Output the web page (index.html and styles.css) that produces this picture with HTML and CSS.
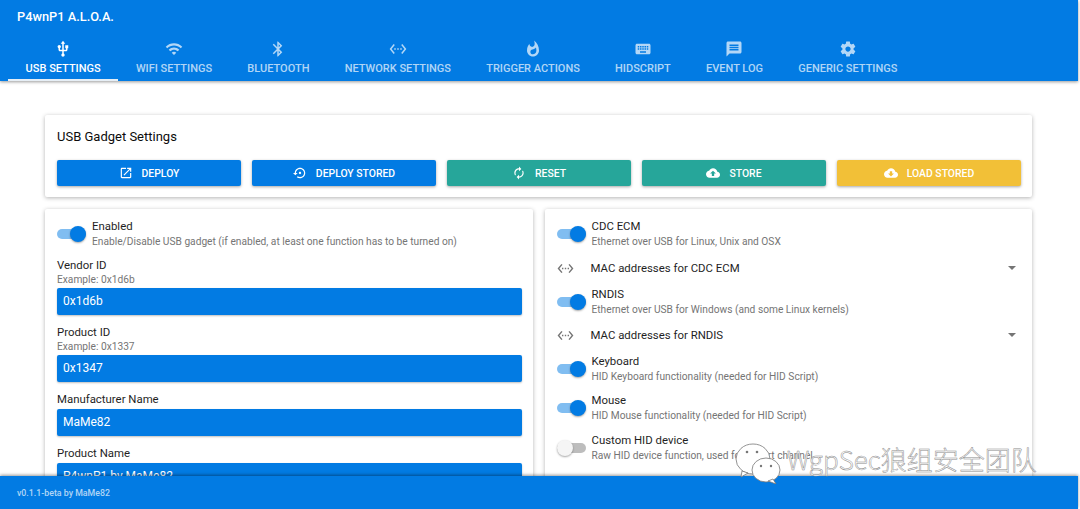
FILE: index.html
```html
<!DOCTYPE html>
<html lang="en">
<head>
    <meta charset="UTF-8" />
    <title>P4wnP1 A.L.O.A.</title>
    <link rel="stylesheet" href="styles.css">
</head>
<body>
    <svg class="sprite" width="0" height="0">
        <symbol id="i-usb" viewBox="0 0 24 24"><path d="M15 7v4h1v2h-3V5h2l-3-4-3 4h2v8H8v-2.07c.7-.37 1.2-1.08 1.2-1.93 0-1.21-.99-2.2-2.2-2.2-1.21 0-2.2.99-2.2 2.2 0 .85.5 1.56 1.2 1.93V13c0 1.11.89 2 2 2h3v3.05c-.71.37-1.2 1.1-1.2 1.95 0 1.22.99 2.2 2.2 2.2 1.21 0 2.2-.98 2.2-2.2 0-.85-.49-1.58-1.2-1.95V15h3c1.11 0 2-.89 2-2v-2h1V7h-4z"/></symbol>
        <symbol id="i-wifi" viewBox="0 0 24 24"><path d="M1 9l2 2c4.97-4.97 13.03-4.97 18 0l2-2C16.93 2.93 7.08 2.93 1 9zm8 8l3 3 3-3c-1.65-1.66-4.34-1.66-6 0zm-4-4l2 2c2.76-2.76 7.24-2.76 10 0l2-2C15.14 9.14 8.87 9.14 5 13z"/></symbol>
        <symbol id="i-bluetooth" viewBox="0 0 24 24"><path d="M17.71 7.71L12 2h-1v7.59L6.41 5 5 6.41 10.59 12 5 17.59 6.41 19 11 14.41V22h1l5.71-5.71-4.3-4.29 4.3-4.29zM13 5.83l1.88 1.88L13 9.59V5.83zm1.88 10.46L13 18.17v-3.76l1.88 1.88z"/></symbol>
        <symbol id="i-ethernet" viewBox="0 0 24 24"><path d="M7.77 6.76L6.23 5.48.82 12l5.41 6.52 1.54-1.28L3.42 12l4.35-5.24zM7 13h2v-2H7v2zm10-2h-2v2h2v-2zm-6 2h2v-2h-2v2zm6.77-7.52l-1.54 1.28L20.58 12l-4.35 5.24 1.54 1.28L23.18 12l-5.41-6.52z"/></symbol>
        <symbol id="i-fire" viewBox="0 0 24 24"><path d="M13.5.67s.74 2.65.74 4.8c0 2.06-1.35 3.73-3.41 3.73-2.07 0-3.63-1.67-3.63-3.73l.03-.36C5.21 7.51 4 10.62 4 14c0 4.42 3.58 8 8 8s8-3.58 8-8C20 8.61 17.41 3.8 13.5.67zM11.71 19c-1.78 0-3.22-1.4-3.22-3.14 0-1.62 1.05-2.76 2.81-3.12 1.77-.36 3.6-1.21 4.62-2.58.39 1.29.59 2.65.59 4.04 0 2.65-2.15 4.8-4.8 4.8z"/></symbol>
        <symbol id="i-keyboard" viewBox="0 0 24 24"><path d="M20 5H4c-1.1 0-1.99.9-1.99 2L2 17c0 1.1.9 2 2 2h16c1.1 0 2-.9 2-2V7c0-1.1-.9-2-2-2zm-9 3h2v2h-2V8zm0 3h2v2h-2v-2zM8 8h2v2H8V8zm0 3h2v2H8v-2zm-1 2H5v-2h2v2zm0-3H5V8h2v2zm9 7H8v-2h8v2zm0-4h-2v-2h2v2zm0-3h-2V8h2v2zm3 3h-2v-2h2v2zm0-3h-2V8h2v2z"/></symbol>
        <symbol id="i-message" viewBox="0 0 24 24"><path d="M20 2H4c-1.1 0-1.99.9-1.99 2L2 22l4-4h14c1.1 0 2-.9 2-2V4c0-1.1-.9-2-2-2zm-2 12H6v-2h12v2zm0-3H6V9h12v2zm0-3H6V6h12v2z"/></symbol>
        <symbol id="i-gear" viewBox="0 0 24 24"><path d="M19.43 12.98c.04-.32.07-.64.07-.98s-.03-.66-.07-.98l2.11-1.65c.19-.15.24-.42.12-.64l-2-3.46c-.12-.22-.39-.3-.61-.22l-2.49 1c-.52-.4-1.08-.73-1.69-.98l-.38-2.65C14.46 2.18 14.25 2 14 2h-4c-.25 0-.46.18-.49.42l-.38 2.65c-.61.25-1.17.59-1.69.98l-2.49-1c-.23-.09-.49 0-.61.22l-2 3.46c-.13.22-.07.49.12.64l2.11 1.65c-.04.32-.07.65-.07.98s.03.66.07.98l-2.11 1.65c-.19.15-.24.42-.12.64l2 3.46c.12.22.39.3.61.22l2.49-1c.52.4 1.08.73 1.69.98l.38 2.65c.03.24.24.42.49.42h4c.25 0 .46-.18.49-.42l.38-2.65c.61-.25 1.17-.59 1.69-.98l2.49 1c.23.09.49 0 .61-.22l2-3.46c.12-.22.07-.49-.12-.64l-2.11-1.65zM12 15.5c-1.93 0-3.5-1.57-3.5-3.5s1.57-3.5 3.5-3.5 3.5 1.57 3.5 3.5-1.57 3.5-3.5 3.5z"/></symbol>
        <symbol id="i-open" viewBox="0 0 24 24"><path d="M19 19H5V5h7V3H5c-1.11 0-2 .9-2 2v14c0 1.1.89 2 2 2h14c1.1 0 2-.9 2-2v-7h-2v7zM14 3v2h3.59l-9.83 9.83 1.41 1.41L19 6.41V10h2V3h-7z"/></symbol>
        <symbol id="i-restore" viewBox="0 0 24 24"><path d="M14 12c0-1.1-.9-2-2-2s-2 .9-2 2 .9 2 2 2 2-.9 2-2zm-2-9c-4.97 0-9 4.03-9 9H0l4 4 4-4H5c0-3.87 3.13-7 7-7s7 3.13 7 7-3.13 7-7 7c-1.51 0-2.91-.49-4.06-1.3l-1.42 1.44C8.04 20.3 9.94 21 12 21c4.97 0 9-4.03 9-9s-4.03-9-9-9z"/></symbol>
        <symbol id="i-renew" viewBox="0 0 24 24"><path d="M12 6v3l4-4-4-4v3c-4.42 0-8 3.58-8 8 0 1.57.46 3.03 1.24 4.26L6.7 14.8c-.45-.83-.7-1.79-.7-2.8 0-3.31 2.69-6 6-6zm6.76 1.74L17.3 9.2c.44.84.7 1.79.7 2.8 0 3.31-2.69 6-6 6v-3l-4 4 4 4v-3c4.42 0 8-3.58 8-8 0-1.57-.46-3.03-1.24-4.26z"/></symbol>
        <symbol id="i-upload" viewBox="0 0 24 24"><path d="M19.35 10.04C18.67 6.59 15.64 4 12 4 9.11 4 6.6 5.64 5.35 8.04 2.34 8.36 0 10.91 0 14c0 3.31 2.69 6 6 6h13c2.76 0 5-2.24 5-5 0-2.64-2.05-4.78-4.65-4.96zM14 13v4h-4v-4H7l5-5 5 5h-3z"/></symbol>
        <symbol id="i-download" viewBox="0 0 24 24"><path d="M19.35 10.04C18.67 6.59 15.64 4 12 4 9.11 4 6.6 5.64 5.35 8.04 2.34 8.36 0 10.91 0 14c0 3.31 2.69 6 6 6h13c2.76 0 5-2.24 5-5 0-2.64-2.05-4.78-4.65-4.96zM17 13l-5 5-5-5h3V9h4v4h3z"/></symbol>
    </svg>

    <div class="app">
        <header class="header">
            <div class="title">P4wnP1 A.L.O.A.</div>
            <nav class="tabs">
                <a class="tab active"><svg><use href="#i-usb"/></svg><span>USB Settings</span></a>
                <a class="tab"><svg><use href="#i-wifi"/></svg><span>WiFi Settings</span></a>
                <a class="tab"><svg><use href="#i-bluetooth"/></svg><span>Bluetooth</span></a>
                <a class="tab"><svg><use href="#i-ethernet"/></svg><span>Network Settings</span></a>
                <a class="tab"><svg><use href="#i-fire"/></svg><span>Trigger Actions</span></a>
                <a class="tab"><svg><use href="#i-keyboard"/></svg><span>HIDScript</span></a>
                <a class="tab"><svg><use href="#i-message"/></svg><span>Event Log</span></a>
                <a class="tab"><svg><use href="#i-gear"/></svg><span>Generic Settings</span></a>
            </nav>
        </header>

        <main class="content">
            <section class="card actions-card">
                <h2 class="card-title">USB Gadget Settings</h2>
                <div class="actions">
                    <button class="btn primary"><svg><use href="#i-open"/></svg>Deploy</button>
                    <button class="btn primary"><svg><use href="#i-restore"/></svg>Deploy Stored</button>
                    <button class="btn teal"><svg><use href="#i-renew"/></svg>Reset</button>
                    <button class="btn teal"><svg><use href="#i-upload"/></svg>Store</button>
                    <button class="btn amber"><svg><use href="#i-download"/></svg>Load Stored</button>
                </div>
            </section>

            <div class="columns">
                <section class="card column">
                    <div class="toggle-row">
                        <span class="toggle on"></span>
                        <div class="toggle-text">
                            <div class="row-title">Enabled</div>
                            <div class="row-desc">Enable/Disable USB gadget (if enabled, at least one function has to be turned on)</div>
                        </div>
                    </div>
                    <div class="field">
                        <label class="row-title">Vendor ID</label>
                        <div class="hint">Example: 0x1d6b</div>
                        <div class="input">0x1d6b</div>
                    </div>
                    <div class="field">
                        <label class="row-title">Product ID</label>
                        <div class="hint">Example: 0x1337</div>
                        <div class="input">0x1347</div>
                    </div>
                    <div class="field">
                        <label class="row-title">Manufacturer Name</label>
                        <div class="input">MaMe82</div>
                    </div>
                    <div class="field">
                        <label class="row-title">Product Name</label>
                        <div class="input">P4wnP1 by MaMe82</div>
                    </div>
                </section>

                <section class="card column">
                    <div class="toggle-row">
                        <span class="toggle on"></span>
                        <div class="toggle-text">
                            <div class="row-title">CDC ECM</div>
                            <div class="row-desc">Ethernet over USB for Linux, Unix and OSX</div>
                        </div>
                    </div>
                    <div class="expand-row">
                        <svg><use href="#i-ethernet"/></svg>
                        <span class="expand-label">MAC addresses for CDC ECM</span>
                        <span class="caret"></span>
                    </div>
                    <div class="toggle-row">
                        <span class="toggle on"></span>
                        <div class="toggle-text">
                            <div class="row-title">RNDIS</div>
                            <div class="row-desc">Ethernet over USB for Windows (and some Linux kernels)</div>
                        </div>
                    </div>
                    <div class="expand-row">
                        <svg><use href="#i-ethernet"/></svg>
                        <span class="expand-label">MAC addresses for RNDIS</span>
                        <span class="caret"></span>
                    </div>
                    <div class="toggle-row">
                        <span class="toggle on"></span>
                        <div class="toggle-text">
                            <div class="row-title">Keyboard</div>
                            <div class="row-desc">HID Keyboard functionality (needed for HID Script)</div>
                        </div>
                    </div>
                    <div class="toggle-row">
                        <span class="toggle on"></span>
                        <div class="toggle-text">
                            <div class="row-title">Mouse</div>
                            <div class="row-desc">HID Mouse functionality (needed for HID Script)</div>
                        </div>
                    </div>
                    <div class="toggle-row">
                        <span class="toggle"></span>
                        <div class="toggle-text">
                            <div class="row-title">Custom HID device</div>
                            <div class="row-desc">Raw HID device function, used for covert channel</div>
                        </div>
                    </div>
                </section>
            </div>
        </main>

        <footer class="footer">v0.1.1-beta by MaMe82</footer>
    </div>

    <!-- wechat account watermark burnt into the screenshot -->
    <div class="watermark">
        <svg class="wm-logo" viewBox="0 0 50 42">
            <ellipse cx="20" cy="17" rx="17" ry="15" fill="#fff" stroke="#777" stroke-width="0.8"/>
            <path d="M9 29l-1 6 7-4z" fill="#fff" stroke="#777" stroke-width="0.8"/>
            <ellipse cx="33" cy="28" rx="14" ry="12" fill="#fff" stroke="#777" stroke-width="0.8"/>
            <path d="M40 37l3 5-8-3z" fill="#fff" stroke="#777" stroke-width="0.8"/>
            <circle cx="14" cy="10" r="1.3" fill="#777"/>
            <circle cx="24" cy="10" r="1.3" fill="#777"/>
            <circle cx="28" cy="24" r="1.2" fill="#777"/>
            <circle cx="38" cy="24" r="1.2" fill="#777"/>
        </svg>
        <span class="wm-text">WgpSec狼组安全团队</span>
    </div>
</body>
</html>
```

FILE: styles.css
```css
* {
    box-sizing: border-box;
}
html, body {
    margin: 0;
    height: 100%;
    overflow: hidden;
}
body {
    font-family: Roboto, "Liberation Sans", sans-serif;
    color: #0c0c0c;
    background: #fff;
    position: relative;
}
.sprite {
    position: absolute;
}
svg {
    fill: currentColor;
}
.app {
    width: 1078px;
    height: 509px;
    display: flex;
    flex-direction: column;
}
.header {
    background: #027be3;
    color: #fff;
    height: 81px;
    flex: none;
    box-shadow: 0 1px 3px rgba(0, 0, 0, 0.4);
    z-index: 2;
}
.title {
    height: 33px;
    line-height: 33px;
    padding-left: 17px;
    font-size: 12.8px;
    font-weight: 500;
}
.tabs {
    display: flex;
    padding-left: 8px;
}
.tab {
    height: 48px;
    padding: 7px 17.6px 0;
    display: flex;
    flex-direction: column;
    align-items: center;
    color: rgba(255, 255, 255, 0.7);
    font-size: 11px;
    font-weight: 500;
    text-transform: uppercase;
}
.tab svg {
    width: 18px;
    height: 18px;
}
.tab span {
    margin-top: 4px;
    line-height: 14px;
}
.tab.active {
    color: #fff;
    border-bottom: 2px solid #e6eef5;
}
.content {
    flex: 1;
    min-height: 0;
    overflow: hidden;
    padding: 34px 46px 0 45px;
}
.card {
    background: #fff;
    border-radius: 2px;
    box-shadow: 0 1px 4px rgba(0, 0, 0, 0.3);
}
.actions-card {
    height: 82px;
    padding: 11px 11px 0 12px;
}
.card-title {
    margin: 0;
    height: 34px;
    font-size: 13px;
    font-weight: 400;
    line-height: 22px;
}
.actions {
    display: flex;
    gap: 11px;
}
.btn {
    flex: 1;
    height: 26px;
    border: none;
    border-radius: 2px;
    color: #fff;
    font-family: inherit;
    font-size: 10.4px;
    font-weight: 500;
    text-transform: uppercase;
    display: flex;
    align-items: center;
    justify-content: center;
    box-shadow: 0 1px 3px rgba(0, 0, 0, 0.35);
}
.btn svg {
    width: 14px;
    height: 14px;
    margin-right: 9px;
}
.primary {
    background: #027be3;
}
.teal {
    background: #26a69a;
}
.amber {
    background: #f2c037;
}
.columns {
    display: flex;
    gap: 12px;
    margin-top: 12px;
}
.column {
    flex: 1;
    height: 290px;
    padding: 5.7px 11px 0 12px;
}
.toggle-row {
    height: 39.6px;
    display: flex;
    align-items: center;
}
.toggle {
    width: 29px;
    height: 10px;
    flex: none;
    border-radius: 5px;
    background: #bdbdbd;
    position: relative;
    margin-right: 6px;
}
.toggle::after {
    content: "";
    position: absolute;
    top: -3px;
    left: 0;
    width: 16px;
    height: 16px;
    border-radius: 50%;
    background: #f5f5f5;
    box-shadow: 0 1px 2px rgba(0, 0, 0, 0.35);
}
.toggle.on {
    background: #80bdf1;
}
.toggle.on::after {
    left: 13px;
    background: #027be3;
}
.row-title {
    display: block;
    font-size: 11.4px;
    line-height: 15px;
    color: #1f1f1f;
}
.row-desc,
.hint {
    font-size: 10.2px;
    line-height: 15px;
    color: #757575;
}
.hint {
    line-height: 14.5px;
}
.field {
    padding-top: 4.2px;
    margin-bottom: 6.3px;
}
.field > .row-title + .input {
    margin-top: 1.5px;
}
.input {
    height: 27px;
    line-height: 27px;
    padding-left: 6px;
    background: #027be3;
    color: #fff;
    font-size: 12px;
    border-radius: 2px;
    box-shadow: 0 1px 2px rgba(0, 0, 0, 0.25);
}
.expand-row {
    height: 27.6px;
    display: flex;
    align-items: center;
    font-size: 11.4px;
    color: #1f1f1f;
}
.expand-row svg {
    width: 17px;
    height: 17px;
    flex: none;
    margin-right: 17px;
    color: #757575;
}
.expand-label {
    flex: 1;
}
.caret {
    width: 0;
    height: 0;
    margin-right: 5px;
    border-left: 4px solid transparent;
    border-right: 4px solid transparent;
    border-top: 4px solid #757575;
}
.footer {
    height: 33px;
    flex: none;
    background: #027be3;
    color: rgba(255, 255, 255, 0.7);
    font-size: 8.8px;
    font-weight: 500;
    line-height: 34px;
    padding-left: 17px;
    box-shadow: 0 -1px 3px rgba(0, 0, 0, 0.4);
    z-index: 2;
}
.watermark {
    position: absolute;
    left: 733px;
    top: 442px;
    display: flex;
    align-items: flex-start;
    z-index: 3;
}
.wm-logo {
    width: 50px;
    height: 42px;
    flex: none;
}
.wm-text {
    margin: 1px 0 0 4px;
    font-family: "Noto Sans CJK SC", sans-serif;
    font-size: 26px;
    font-weight: 300;
    line-height: 32px;
    white-space: nowrap;
    color: #fff;
    -webkit-text-stroke: 0.5px #8a8a8a;
}
```
